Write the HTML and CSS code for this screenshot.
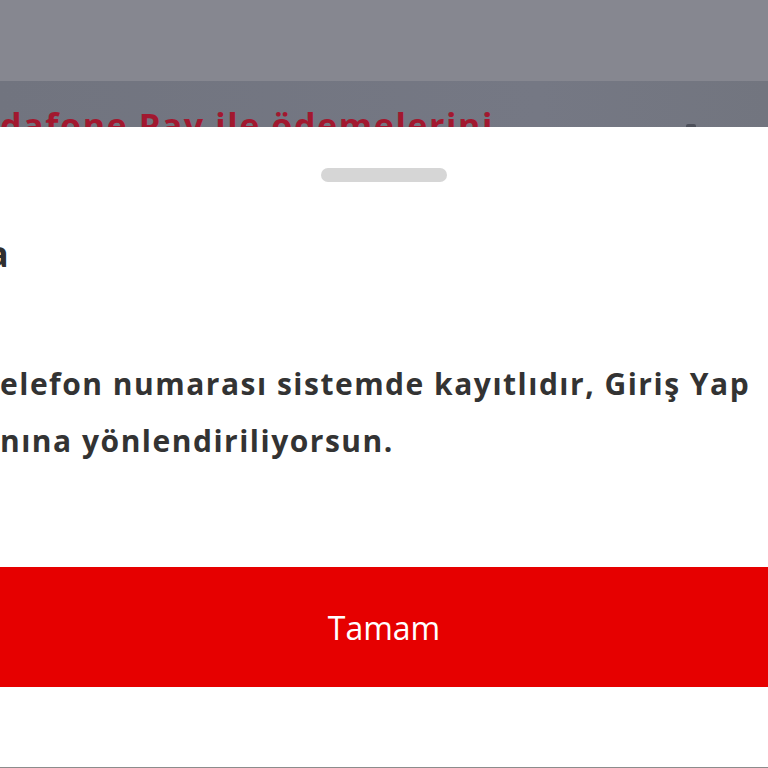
FILE: index.html
```html
<!DOCTYPE html>
<html lang="tr">
<head>
  <meta charset="UTF-8">
  <meta name="viewport" content="width=device-width, initial-scale=1.0">
  <title>Uyarı</title>
  <link rel="stylesheet" href="styles.css">
</head>
<body>
  <!-- Dimmed page behind the sheet -->
  <div class="backdrop">
    <div class="backdrop-top"></div>
    <div class="backdrop-banner">
      <div class="banner-title">dafone Pay ile ödemelerini</div>
      <span class="banner-mark"></span>
    </div>
  </div>

  <!-- Bottom sheet -->
  <div class="sheet">
    <div class="sheet-handle"></div>
    <div class="sheet-title">a</div>
    <p class="sheet-text">elefon numarası sistemde kayıtlıdır, Giriş Yap<br>nına yönlendiriliyorsun.</p>
    <button class="sheet-button">Tamam</button>
    <div class="sheet-footer"></div>
  </div>
</body>
</html>
```

FILE: styles.css
```css
html, body {
  margin: 0;
  padding: 0;
  height: 768px;
  overflow: hidden;
  background: #ffffff;
  font-family: "Open Sans", Lato, sans-serif;
}

.backdrop-top {
  height: 81px;
  background: #868790;
}

.backdrop-banner {
  position: relative;
  height: 46px;
  overflow: hidden;
  background: linear-gradient(90deg, #71747f 0%, #757884 70%, #72757f 100%);
}

.banner-title {
  padding-top: 24px;
  font-size: 34px;
  font-weight: 700;
  line-height: 40px;
  letter-spacing: 1.6px;
  color: #a2182f;
  white-space: nowrap;
}

.banner-mark {
  position: absolute;
  left: 686px;
  bottom: 0;
  width: 10px;
  height: 3px;
  background: #4d505a;
  border-radius: 2px 2px 0 0;
}

.sheet {
  display: flex;
  flex-direction: column;
  height: 641px;
  background: #ffffff;
}

.sheet-handle {
  align-self: center;
  width: 126px;
  height: 14px;
  margin-top: 41px;
  border-radius: 7px;
  background: #d6d6d6;
}

.sheet-title {
  margin: 50px 0 0 -13px;
  font-size: 36px;
  font-weight: 700;
  line-height: 44px;
  color: #2f2f2f;
  white-space: nowrap;
}

.sheet-text {
  margin: 79px 0 0 0;
  font-size: 30px;
  font-weight: 700;
  line-height: 57px;
  letter-spacing: 1.5px;
  color: #333333;
  white-space: nowrap;
}

.sheet-button {
  height: 120px;
  margin-top: 98px;
  padding: 0;
  border: none;
  background: #e60000;
  color: #ffffff;
  font-family: "Open Sans", sans-serif;
  font-size: 32px;
  font-weight: 400;
}

.sheet-footer {
  margin-top: auto;
  height: 1px;
  background: #8c8c8c;
}
```
